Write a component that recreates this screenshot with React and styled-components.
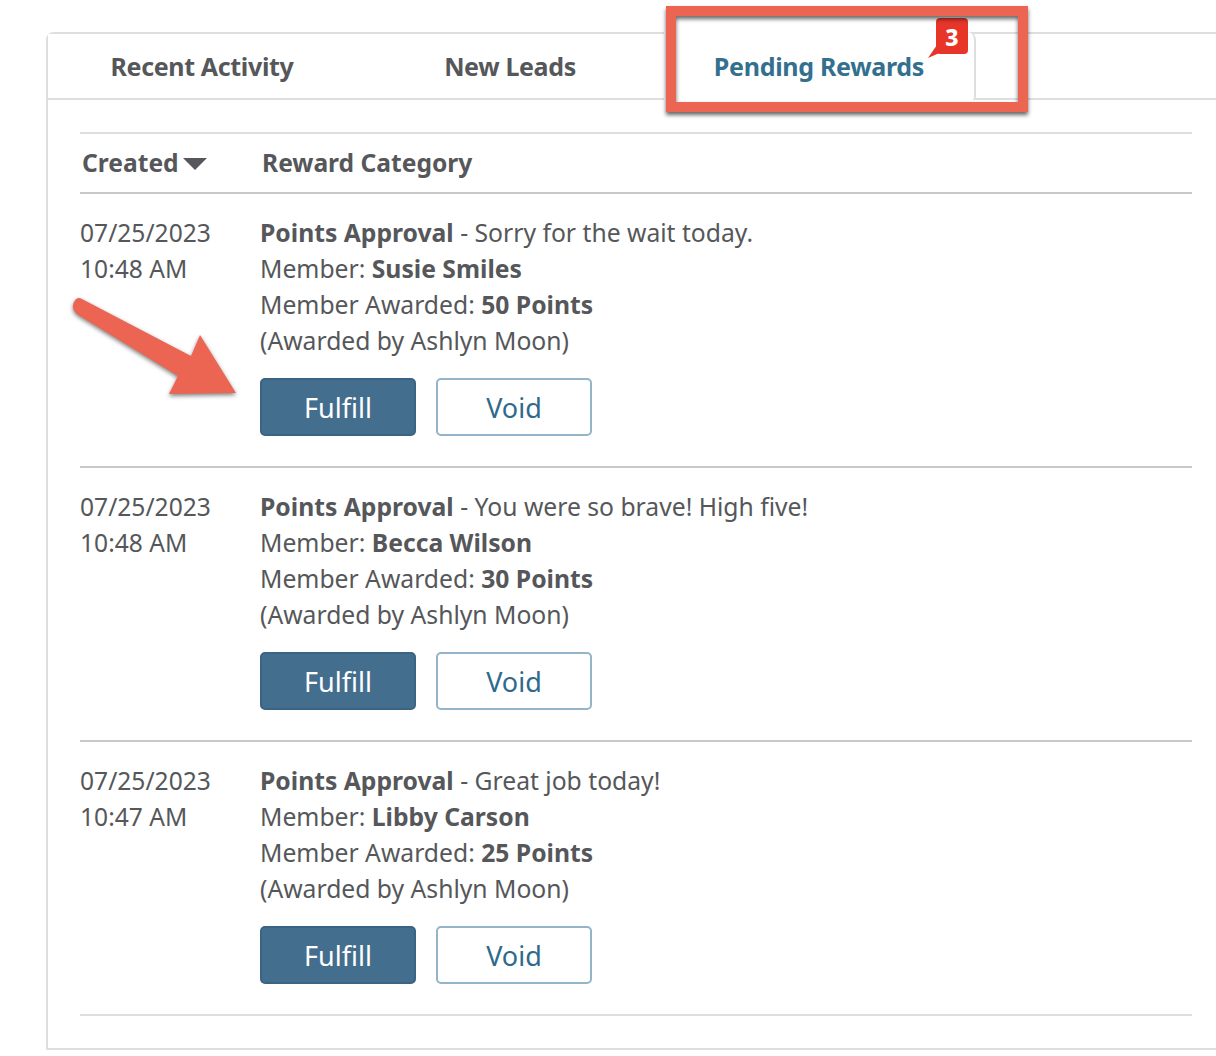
import React from 'react';
import styled, { createGlobalStyle } from 'styled-components';

const rewards = [
  { date: '07/25/2023', time: '10:48 AM', note: 'Sorry for the wait today.', member: 'Susie Smiles', points: 50 },
  { date: '07/25/2023', time: '10:48 AM', note: 'You were so brave! High five!', member: 'Becca Wilson', points: 30 },
  { date: '07/25/2023', time: '10:47 AM', note: 'Great job today!', member: 'Libby Carson', points: 25 },
];

const App = () => {
  return (
    <Page>
      <GlobalStyle />
      <Card>
        <TabBar>
          <Tab>Recent Activity</Tab>
          <Tab>New Leads</Tab>
          <Tab $active>
            Pending Rewards
            <Badge>3</Badge>
          </Tab>
        </TabBar>
        <Content>
          <HeaderRow>
            <HeaderCell>
              Created
              <SortCaret />
            </HeaderCell>
            <HeaderCell>Reward Category</HeaderCell>
          </HeaderRow>
          {rewards.map((r) => (
            <Row key={r.member}>
              <DateCell>
                <div>{r.date}</div>
                <div>{r.time}</div>
              </DateCell>
              <div>
                <Line><b>Points Approval</b> - {r.note}</Line>
                <Line>Member: <b>{r.member}</b></Line>
                <Line>Member Awarded: <b>{r.points} Points</b></Line>
                <Line>(Awarded by Ashlyn Moon)</Line>
                <Actions>
                  <ActionButton $primary>Fulfill</ActionButton>
                  <ActionButton>Void</ActionButton>
                </Actions>
              </div>
            </Row>
          ))}
        </Content>
      </Card>
      <Highlight />
      <Arrow viewBox="0 0 180 120" width="180" height="120">
        <path d="M16 9 L125 66 L134 45 L170 103 L103 104 L112 86 L14 26 Q4 20 8 12 Q11 6 16 9 Z" fill="#ec6553" />
      </Arrow>
    </Page>
  );
};

const GlobalStyle = createGlobalStyle`
html, body {
  margin: 0;
  height: 1056px;
  overflow: hidden;
  background: #fff;
}
`;

const Page = styled.div`
position: relative;
height: 1056px;
padding: 32px 0 0 46px;
box-sizing: border-box;
font-family: "Noto Sans", "Liberation Sans", sans-serif;
color: #55575a;
`;

const Card = styled.div`
border: 2px solid #dedede;
border-right: none;
border-top-left-radius: 8px;
height: 1018px;
box-sizing: border-box;
`;

const TabBar = styled.div`
display: flex;
height: 66px;
box-sizing: border-box;
border-bottom: 2px solid #dedede;
`;

const Tab = styled.div`
position: relative;
box-sizing: border-box;
width: 308px;
height: 64px;
display: flex;
align-items: center;
justify-content: center;
font-size: 25px;
font-weight: 700;
letter-spacing: -0.35px;
color: #55575a;
background: #fff;
${(p) => p.$active && `
  width: 312px;
  height: 68px;
  margin-top: -2px;
  letter-spacing: -0.3px;
  color: #33708f;
  border-right: 2px solid #dedede;
  border-top-right-radius: 8px;
  border-bottom-right-radius: 4px;
`}
`;

const Badge = styled.span`
position: absolute;
top: -14px;
right: 6px;
width: 32px;
height: 36px;
border-radius: 4px;
background: #e8352a;
color: #fff;
font-size: 23px;
font-weight: 800;
line-height: 38px;
text-align: center;
letter-spacing: 0;
&::after {
  content: '';
  position: absolute;
  left: -8px;
  bottom: -4px;
  width: 16px;
  height: 14px;
  background: #e8352a;
  clip-path: polygon(0 100%, 60% 0, 100% 50%);
}
`;

const Content = styled.div`
padding: 32px 24px 0 32px;
`;

const HeaderRow = styled.div`
display: grid;
grid-template-columns: 180px 1fr;
height: 62px;
padding-bottom: 2px;
align-items: center;
border-top: 2px solid #dedede;
border-bottom: 2px solid #c8c8c8;
box-sizing: border-box;
`;

const HeaderCell = styled.div`
display: flex;
align-items: center;
padding-left: 2px;
font-size: 24.6px;
font-weight: 700;
`;

const SortCaret = styled.span`
width: 0;
height: 0;
margin: 4px 0 0 4px;
border-left: 12px solid transparent;
border-right: 12px solid transparent;
border-top: 12px solid #55575a;
`;

const Row = styled.div`
display: grid;
grid-template-columns: 180px 1fr;
padding-top: 21px;
height: 251px;
box-sizing: content-box;
border-bottom: 2px solid #c8c8c8;
&:last-child {
  border-bottom-color: #dedede;
}
`;

const DateCell = styled.div`
font-size: 24.6px;
line-height: 36px;
`;

const Line = styled.div`
font-size: 24.7px;
line-height: 36px;
white-space: nowrap;
`;

const Actions = styled.div`
display: flex;
gap: 20px;
margin-top: 19px;
`;

const ActionButton = styled.button`
width: 156px;
height: 58px;
padding: 0;
box-sizing: border-box;
border-radius: 5px;
border: 2px solid ${(p) => (p.$primary ? '#3a6484' : '#94b4c8')};
background: ${(p) => (p.$primary ? '#436e8e' : '#fff')};
color: ${(p) => (p.$primary ? '#fff' : '#2e6a8c')};
font-family: "Noto Sans", "Liberation Sans", sans-serif;
font-size: 27px;
font-variant-ligatures: none;
`;

const Highlight = styled.div`
position: absolute;
left: 666px;
top: 6px;
width: 362px;
height: 106px;
box-sizing: border-box;
border: 10px solid #ec6553;
box-shadow: 0 3px 4px rgba(0, 0, 0, 0.6), inset 0 3px 4px rgba(0, 0, 0, 0.6);
`;

const Arrow = styled.svg`
position: absolute;
left: 66px;
top: 290px;
filter: drop-shadow(0 2px 2px rgba(0, 0, 0, 0.5));
`;

export default App;
